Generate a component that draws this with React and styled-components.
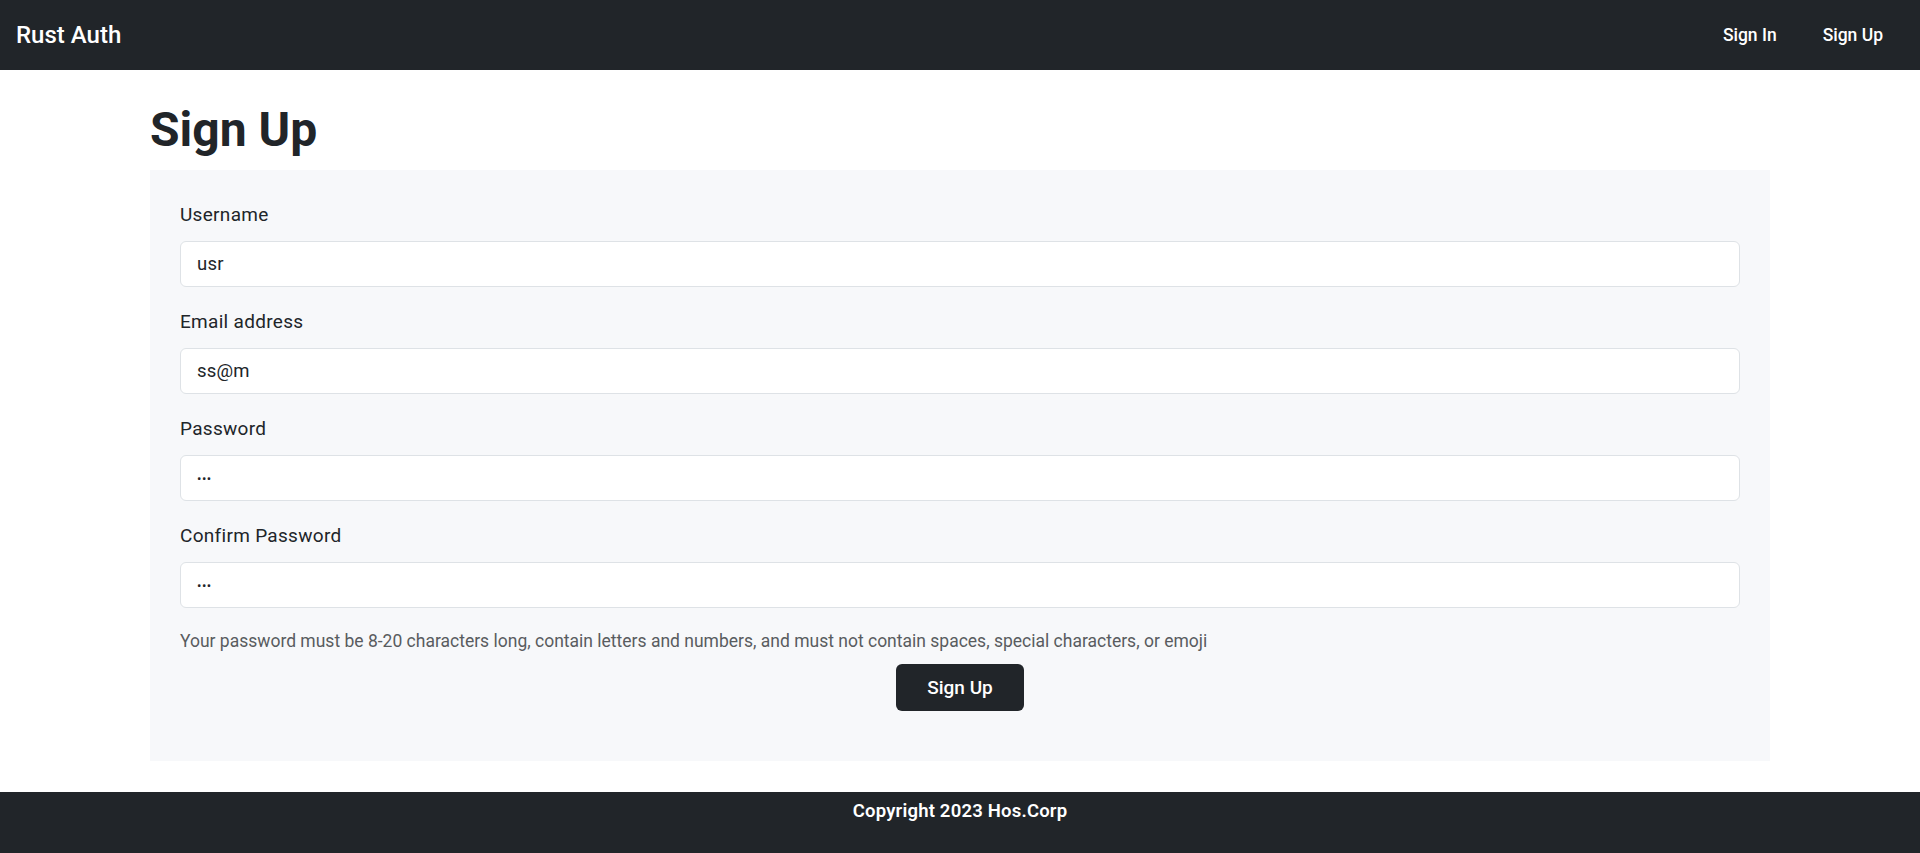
import React from "react";
import styled, { createGlobalStyle } from "styled-components";

const Global = createGlobalStyle`
  html, body { margin: 0; padding: 0; background: #ffffff; }
  body { font-family: Roboto, "Liberation Sans", sans-serif; color: #212529; }
  * { box-sizing: border-box; }
`;

const Page = styled.div`
  min-height: 853px;
  display: flex;
  flex-direction: column;
`;

const Navbar = styled.nav`
  height: 70px;
  background: #212529;
  display: flex;
  align-items: center;
  justify-content: space-between;
  padding: 0 37px 0 16px;
`;

const Brand = styled.a`
  color: #ffffff;
  font-size: 24px;
  font-weight: 500;
  line-height: 1;
  text-decoration: none;
`;

const NavLinks = styled.div`
  display: flex;
  align-items: center;
  gap: 46px;
`;

const NavLink = styled.a`
  color: #ffffff;
  font-size: 17.5px;
  font-weight: 500;
  line-height: 27px;
  text-decoration: none;
`;

const Main = styled.main`
  padding: 0 150px;
`;

const Title = styled.h1`
  margin: 31px 0 11px;
  font-size: 48px;
  line-height: 58px;
  font-weight: 700;
  color: #212529;
`;

const Card = styled.form`
  background: #f7f8fa;
  padding: 31px 30px 50px;
  display: flex;
  flex-direction: column;
`;

const Field = styled.div`
  display: flex;
  flex-direction: column;
  margin-bottom: 21px;
`;

const Label = styled.label`
  font-size: 19px;
  letter-spacing: 0.3px;
  line-height: 27px;
  margin-bottom: 13px;
  color: #212529;
`;

const Input = styled.input`
  height: 46px;
  width: 100%;
  border: 1px solid #dee2e6;
  border-radius: 6px;
  background: #ffffff;
  padding: 0 16px;
  font-family: inherit;
  font-size: ${(p) => (p.type === "password" ? "13px" : "18.5px")};
  letter-spacing: ${(p) => (p.type === "password" ? "0.5px" : "0.2px")};
  color: #212529;
  outline: none;
`;

const Help = styled.div`
  font-size: 17.5px;
  line-height: 25px;
  color: #595c5f;
`;

const Submit = styled.button`
  align-self: center;
  margin-top: 10px;
  width: 128px;
  height: 47px;
  border: none;
  border-radius: 6px;
  background: #212529;
  color: #ffffff;
  font-family: inherit;
  font-size: 19px;
  font-weight: 500;
  cursor: pointer;
`;

const Footer = styled.footer`
  margin-top: 31px;
  height: 61px;
  background: #212529;
  color: #ffffff;
  text-align: center;
  padding-top: 6px;
  font-size: 18.5px;
  letter-spacing: 0.2px;
  line-height: 27px;
  font-weight: 600;
`;

const fields = [
  { id: "username", label: "Username", type: "text", value: "usr" },
  { id: "email", label: "Email address", type: "text", value: "ss@m" },
  { id: "password", label: "Password", type: "password", value: "abc" },
  { id: "confirm", label: "Confirm Password", type: "password", value: "abc" },
];

export default function App() {
  return (
    <Page>
      <Global />
      <Navbar>
        <Brand href="#">Rust Auth</Brand>
        <NavLinks>
          <NavLink href="#">Sign In</NavLink>
          <NavLink href="#">Sign Up</NavLink>
        </NavLinks>
      </Navbar>
      <Main>
        <Title>Sign Up</Title>
        <Card onSubmit={(e) => e.preventDefault()}>
          {fields.map((f) => (
            <Field key={f.id}>
              <Label htmlFor={f.id}>{f.label}</Label>
              <Input id={f.id} type={f.type} defaultValue={f.value} />
            </Field>
          ))}
          <Help>
            Your password must be 8-20 characters long, contain letters and numbers, and must not contain spaces, special characters, or emoji
          </Help>
          <Submit type="submit">Sign Up</Submit>
        </Card>
      </Main>
      <Footer>Copyright 2023 Hos.Corp</Footer>
    </Page>
  );
}
